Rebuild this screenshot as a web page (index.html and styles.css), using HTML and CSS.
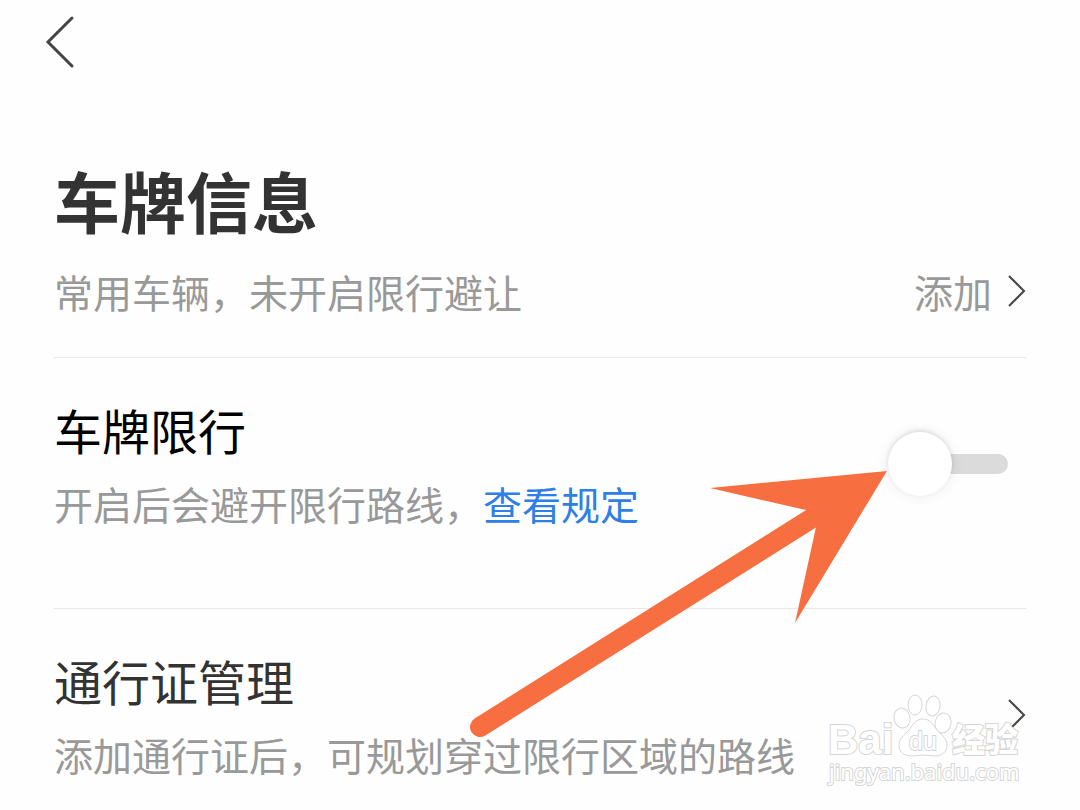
FILE: index.html
```html
<!DOCTYPE html>
<html lang="zh-CN">
<head>
  <meta charset="UTF-8">
  <meta name="viewport" content="width=device-width, initial-scale=1">
  <title>车牌信息</title>
  <link rel="stylesheet" href="styles.css">
</head>
<body>
  <div class="page">
    <header class="topbar">
      <button class="back" type="button" aria-label="返回">
        <svg width="32" height="54" viewBox="0 0 32 54"><path d="M28 3L4 27l24 24"/></svg>
      </button>
    </header>

    <main>
      <h1>车牌信息</h1>

      <div class="row summary">
        <p>常用车辆，未开启限行避让</p>
        <a class="add" href="#add">
          添加
          <svg class="chevron" width="18" height="32" viewBox="0 0 18 32"><path d="M1 1l15 15L1 31"/></svg>
        </a>
      </div>

      <section class="row">
        <div class="info">
          <h2 class="active"><label for="limit-switch">车牌限行</label></h2>
          <p>开启后会避开限行路线，<a class="rules" href="#rules">查看规定</a></p>
        </div>
        <input class="switch control" id="limit-switch" type="checkbox" role="switch">
      </section>

      <section class="row">
        <div class="info">
          <h2>通行证管理</h2>
          <p>添加通行证后，可规划穿过限行区域的路线</p>
        </div>
        <a class="control" href="#permits" aria-label="通行证管理">
          <svg class="chevron" width="18" height="32" viewBox="0 0 18 32"><path d="M1 1l15 15L1 31"/></svg>
        </a>
      </section>
    </main>

    <!-- pointer to the switch -->
    <svg class="arrow" width="420" height="270" viewBox="0 0 420 270" aria-hidden="true">
      <path class="arrow-tail" d="M13 259L350 47"/>
      <path class="arrow-head" d="M420 3L243 20l96 22 10 17-21 96z"/>
    </svg>

    <svg class="watermark" width="200" height="100" viewBox="0 0 200 100" role="img" aria-label="Baidu 经验">
      <text class="wm-latin" x="2" y="64">Bai</text>
      <ellipse cx="76" cy="28" rx="8" ry="10" transform="rotate(-12 76 28)"/>
      <ellipse cx="89" cy="15" rx="7" ry="10"/>
      <ellipse cx="107" cy="16" rx="7" ry="10" transform="rotate(10 107 16)"/>
      <ellipse cx="117" cy="33" rx="8" ry="10" transform="rotate(12 117 33)"/>
      <path d="M97 29c-8 0-10 6-14 11-5 6-10 8-10 15 0 8 6 11 13 11 4 0 7-1 11-1s7 1 11 1c8 0 13-4 13-11s-5-9-10-15c-4-5-6-11-14-11z"/>
      <text class="wm-du" x="83" y="60">du</text>
      <text class="wm-cjk" x="126" y="62">经验</text>
      <text class="wm-url" x="3" y="90">jingyan.baidu.com</text>
    </svg>
  </div>
</body>
</html>
```
FILE: styles.css
```css
:root {
  --bg-color: #fefefe;
  --title-color: #333333;
  --muted-color: #999999;
  --link-color: #2e7fe6;
  --border-color: #e8e8e8;
  --arrow-color: #f76f41;
}

* {
  box-sizing: border-box;
}

body {
  margin: 0;
  background-color: var(--bg-color);
  color: var(--title-color);
  font-family: "Noto Sans CJK SC", sans-serif;
}

.page {
  position: relative;
  padding: 0 54px;
}

.topbar {
  height: 151px;
  padding-top: 15px;
}

.back {
  display: block;
  margin-left: -10px;
  padding: 0;
  border: 0;
  background: none;
}

.back svg {
  display: block;
  fill: none;
  stroke: #444444;
  stroke-width: 3;
  stroke-linecap: round;
}

h1, h2, p {
  margin: 0;
}

h1 {
  font-size: 66px;
  line-height: 96px;
  font-weight: 700;
}

h2 {
  font-size: 48px;
  line-height: 72px;
  font-weight: 400;
}

h2.active {
  color: #000000;
}

p, .add {
  font-size: 39px;
  line-height: 76px;
  color: var(--muted-color);
}

a {
  text-decoration: none;
}

.rules {
  color: var(--link-color);
}

.row {
  display: flex;
  align-items: center;
  justify-content: space-between;
  padding: 35px 0 67px;
  border-bottom: 1px solid var(--border-color);
}

.row.summary {
  padding: 6px 0 28px;
}

.row:last-child {
  padding-bottom: 0;
  border-bottom: 0;
}

.add {
  display: flex;
  align-items: center;
  gap: 16px;
}

.chevron {
  display: block;
  fill: none;
  stroke: #444444;
  stroke-width: 2;
}

.control {
  flex: none;
  margin: 0 0 6px;
}

.switch {
  appearance: none;
  display: flex;
  align-items: center;
  width: 120px;
  height: 20px;
  margin-right: 18px;
  border-radius: 10px;
  background-color: #dbdbdb;
}

.switch::before {
  content: "";
  flex: none;
  width: 64px;
  height: 64px;
  border-radius: 50%;
  background-color: #ffffff;
  box-shadow: 0 0 14px rgba(0, 0, 0, 0.08), 0 -2px 4px rgba(0, 0, 0, 0.1);
}

.switch:checked {
  justify-content: flex-end;
  background-color: var(--link-color);
}

.arrow {
  position: absolute;
  top: 468px;
  right: 193px;
  pointer-events: none;
}

.arrow-tail {
  fill: none;
  stroke: var(--arrow-color);
  stroke-width: 20;
  stroke-linecap: round;
}

.arrow-head {
  fill: var(--arrow-color);
}

.watermark {
  position: absolute;
  top: 690px;
  right: 54px;
  fill: #ffffff;
  stroke: #d6d6d6;
  stroke-width: 1;
  pointer-events: none;
}

.watermark text {
  paint-order: stroke;
  stroke-width: 2;
}

.wm-latin {
  font: 700 42px "Liberation Sans", sans-serif;
}

.wm-du {
  font: 400 25px "Liberation Sans", sans-serif;
}

.wm-cjk {
  font: 900 33px "Noto Sans CJK SC", sans-serif;
}

.wm-url {
  font: 400 22px "Noto Sans", sans-serif;
}
```
